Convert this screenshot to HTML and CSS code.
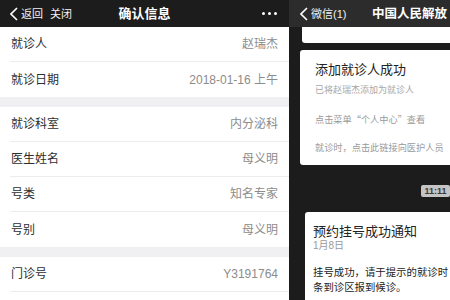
FILE: index.html
```html
<!DOCTYPE html>
<html lang="zh">
<head>
<meta charset="utf-8">
<link rel="stylesheet" href="styles.css">
</head>
<body>
<div class="screen">
  <section class="phone-left">
    <header class="bar">
      <div class="bar-left">
        <svg class="chev" viewBox="0 0 8 14" width="8" height="14"><polyline points="7,1 1,7 7,13" fill="none" stroke="#fff" stroke-width="1.6"/></svg>
        <span class="bar-link">返回</span>
        <span class="bar-link">关闭</span>
      </div>
      <div class="bar-title">确认信息</div>
      <div class="bar-right"><span class="dot"></span><span class="dot"></span><span class="dot"></span></div>
    </header>
    <div class="group">
      <div class="row"><span class="label">就诊人</span><span class="value">赵瑞杰</span></div>
      <div class="row"><span class="label">就诊日期</span><span class="value">2018-01-16 上午</span></div>
    </div>
    <div class="group">
      <div class="row"><span class="label">就诊科室</span><span class="value">内分泌科</span></div>
      <div class="row"><span class="label">医生姓名</span><span class="value">母义明</span></div>
      <div class="row"><span class="label">号类</span><span class="value">知名专家</span></div>
      <div class="row"><span class="label">号别</span><span class="value">母义明</span></div>
    </div>
    <div class="group">
      <div class="row"><span class="label">门诊号</span><span class="value">Y3191764</span></div>
      <div class="row"><span class="label"></span><span class="value"></span></div>
    </div>
  </section>
  <section class="phone-right">
    <header class="bar bar-dark">
      <div class="bar-left">
        <svg class="chev" viewBox="0 0 8 14" width="8" height="14"><polyline points="7,1 1,7 7,13" fill="none" stroke="#fff" stroke-width="1.6"/></svg>
        <span class="bar-link">微信(1)</span>
      </div>
      <div class="bar-title2">中国人民解放</div>
    </header>
    <div class="chat">
      <div class="card card-top"></div>
      <div class="card card-msg">
        <div class="msg-title">添加就诊人成功</div>
        <div class="msg-sub">已将赵瑞杰添加为就诊人</div>
        <div class="msg-line l3">点击菜单“个人中心”查看</div>
        <div class="msg-line l4">就诊时，点击此链接向医护人员</div>
      </div>
      <div class="time-wrap"><span class="time">11:11</span></div>
      <div class="card card-notice">
        <div class="n-title">预约挂号成功通知</div>
        <div class="n-date">1月8日</div>
        <div class="n-body">挂号成功，请于提示的就诊时<br>条到诊区报到候诊。</div>
      </div>
    </div>
  </section>
</div>
</body>
</html>
```

FILE: styles.css
```css
* { box-sizing: border-box; margin: 0; padding: 0; }
html, body { width: 450px; height: 300px; overflow: hidden; background: #0c0c0c; }
body { font-family: "Liberation Sans", "Noto Sans CJK SC", sans-serif; }

.screen { display: flex; width: 450px; height: 300px; overflow: hidden; }

.phone-left { width: 289px; flex: none; background: #f0f0f2; height: 300px; }

.bar { height: 27px; background: #1c1c1d; display: grid; grid-template-columns: 1fr auto 1fr; align-items: center; color: #fff; }
.bar-left { display: flex; align-items: center; padding-left: 10px; gap: 7px; }
.chev { display: block; margin-right: -4px; }
.bar-link { font-size: 11px; line-height: 14px; color: #f2f2f2; }
.bar-title { font-size: 13px; font-weight: bold; line-height: 16px; color: #fff; }
.bar-right { display: flex; justify-content: flex-end; gap: 2.5px; padding-right: 12px; }
.dot { width: 3.5px; height: 3.5px; border-radius: 50%; background: #fff; }

.group { background: #fff; margin-bottom: 10px; }
.row { height: 35px; margin-left: 10px; padding: 0 11px 0 1px; display: flex; align-items: center; justify-content: space-between; border-bottom: 1px solid #ececec; }
.row:last-child { border-bottom: none; }
.label { font-size: 12px; color: #2e2e2e; line-height: 16px; }
.value { font-size: 12px; color: #8c8c8c; line-height: 16px; }

.phone-right { width: 293px; flex: none; height: 300px; background: #1c1c1c; }
.bar-dark { background: #2c2c2d; display: flex; }
.bar-dark .bar-left { padding-left: 11px; gap: 7px; width: 83px; flex: none; }
.bar-title2 { font-size: 12.5px; font-weight: bold; color: #fff; line-height: 16px; white-space: nowrap; }

.chat { display: flex; flex-direction: column; align-items: flex-start; }
.card { background: #fff; border-radius: 3px; width: 270px; }
.card-top { height: 16px; margin-left: 13px; border-radius: 0 0 3px 3px; }
.card-msg { margin-left: 11px; margin-top: 7px; height: 115px; padding: 11px 0 0 15px; }
.msg-title { font-size: 13px; line-height: 18px; color: #222; white-space: nowrap; }
.msg-sub { font-family: "Noto Sans CJK SC", sans-serif; font-size: 9px; line-height: 12px; color: #a8a8a8; margin-top: 5px; white-space: nowrap; }
.msg-line { font-family: "Noto Sans CJK SC", sans-serif; font-size: 9.2px; line-height: 12px; color: #9a9a9a; white-space: nowrap; }
.l3 { margin-top: 17px; }
.l4 { margin-top: 16px; }

.time-wrap { width: 293px; display: flex; justify-content: center; margin-top: 20px; }
.time { background: #c4c4c4; color: #3a3a3a; font-size: 9px; font-weight: bold; line-height: 12px; padding: 0 3px; border-radius: 2px; }

.card-notice { margin-left: 16px; margin-top: 15px; height: 100px; padding: 12px 0 0 8px; }
.n-title { font-size: 13px; line-height: 16px; color: #222; white-space: nowrap; }
.n-date { font-size: 10px; line-height: 12px; color: #9a9a9a; }
.n-body { font-family: "Noto Sans CJK SC", sans-serif; font-size: 10.4px; line-height: 15px; color: #222; margin-top: 12px; white-space: nowrap; }
```
